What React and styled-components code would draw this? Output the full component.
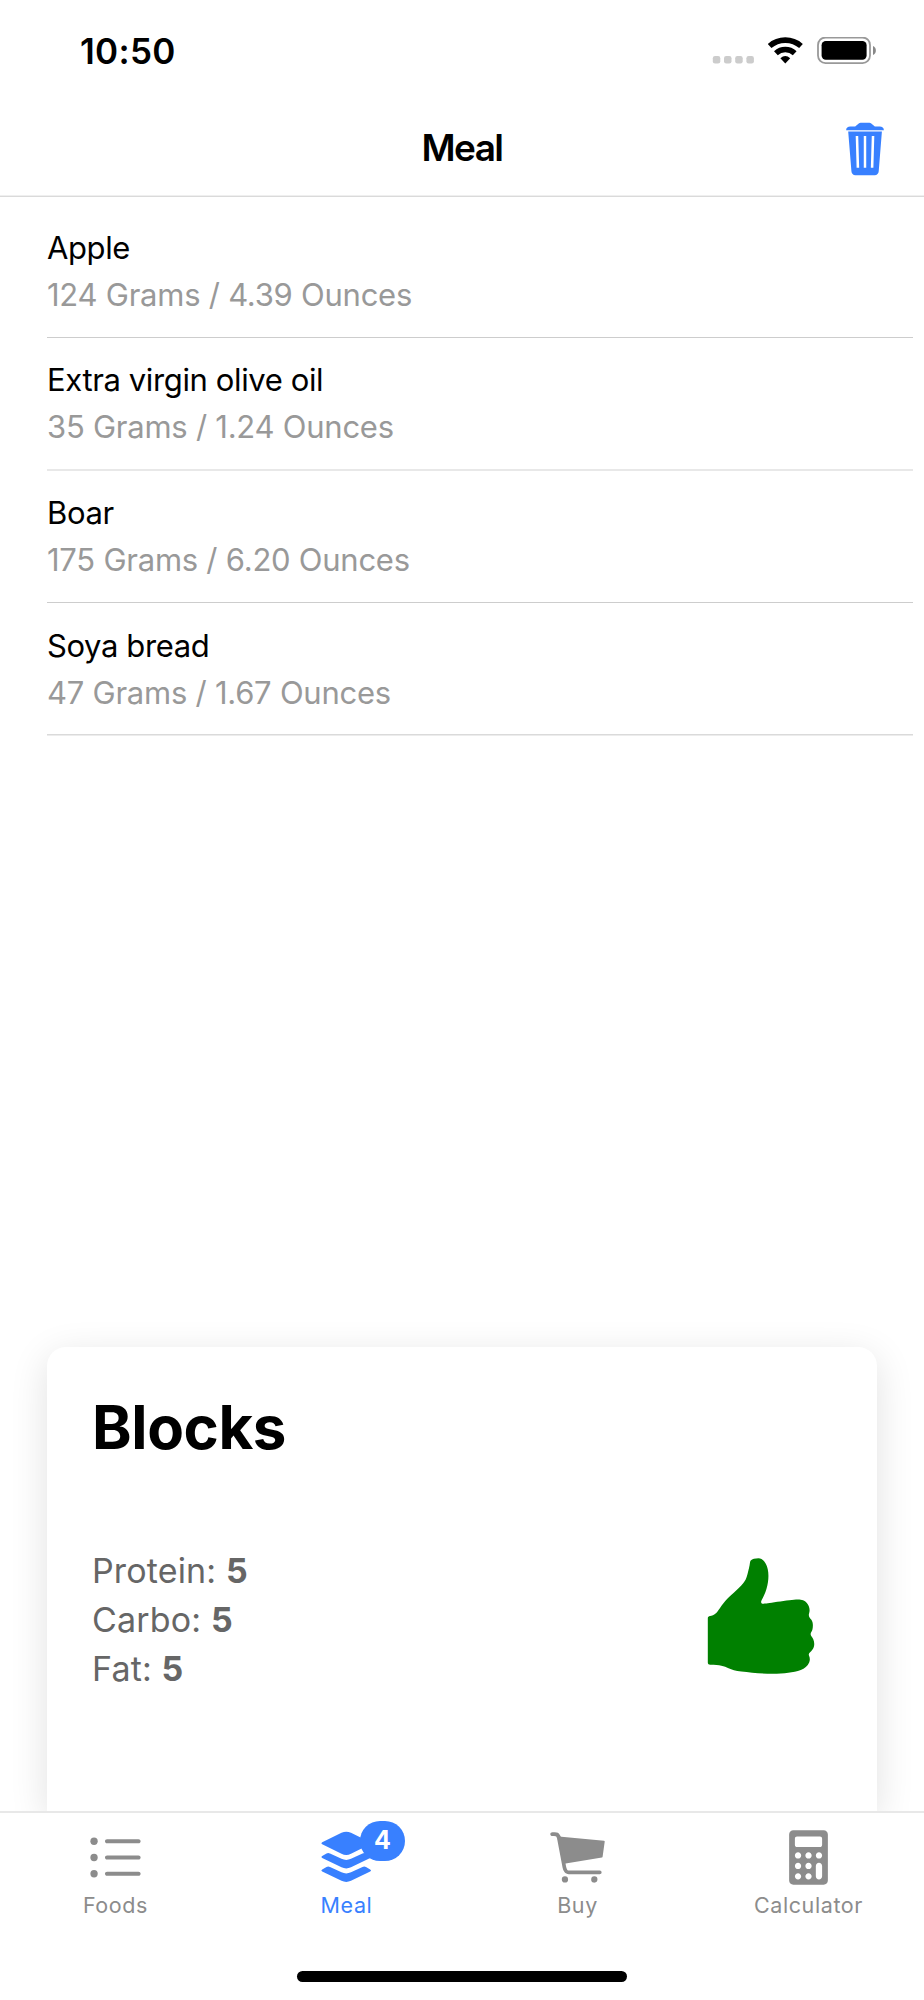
import styled, { createGlobalStyle } from "styled-components";
import {
  IoIosCalculator,
  IoIosCart,
  IoIosList,
  IoIosThumbsUp,
  IoIosTrash,
} from "react-icons/io";

const GlobalStyle = createGlobalStyle`
  * {
    box-sizing: border-box;
  }
  body {
    margin: 0;
    background: #fff;
  }
`;

const Screen = styled.div`
  display: flex;
  flex-direction: column;
  width: 924px;
  height: 2000px;
  overflow: hidden;
  background: #fff;
  color: #000;
  font-family: Inter, "Liberation Sans", sans-serif;
  svg {
    display: block;
    flex-shrink: 0;
  }
`;

const StatusBar = styled.div`
  display: flex;
  justify-content: space-between;
  align-items: center;
  height: 102px;
  padding: 0 47px 0 80px;
`;

const Time = styled.span`
  font-size: 35px;
  font-weight: 600;
  letter-spacing: 0.3px;
`;

const StatusIcons = styled.div`
  display: flex;
  align-items: center;
`;

const Toolbar = styled.header`
  display: grid;
  grid-template-columns: 1fr auto 1fr;
  align-items: center;
  height: 95px;
  padding: 0 24px;
  border-bottom: 1px solid #dadada;
  box-shadow: inset 0 -1px #efefef;
`;

const Title = styled.h1`
  grid-column: 2;
  margin: 0;
  padding-bottom: 3px;
  font-size: 37px;
  font-weight: 600;
  letter-spacing: -1.6px;
`;

const ClearButton = styled.button`
  justify-self: end;
  padding: 0;
  border: 0;
  background: none;
  color: #3880ff;
`;

const Content = styled.main`
  display: flex;
  flex-direction: column;
  justify-content: space-between;
  flex: 1;
  min-height: 0;
  overflow: hidden;
`;

const List = styled.ul`
  margin: 0;
  padding: 8px 11px 0 47px;
  list-style: none;
`;

const Item = styled.li`
  height: 132.8px;
  padding-top: 23.6px;
  border-bottom: 1px solid ${(props) => (props.$soft ? "#e8e8e8" : "#cdcdcd")};
  box-shadow: ${(props) => (props.$soft ? "inset 0 -1px #e8e8e8" : "none")};
  &:last-child {
    border-color: #ececec;
    box-shadow: inset 0 -1px #dadada;
  }
`;

const ItemName = styled.h2`
  margin: 0;
  font-size: 31px;
  font-weight: 400;
  line-height: 37px;
  letter-spacing: -0.38px;
`;

const ItemAmount = styled.p`
  margin: 10px 0 0;
  color: #999;
  font-size: 31px;
  line-height: 37px;
  letter-spacing: -0.25px;
`;

const Card = styled.section`
  flex-shrink: 0;
  height: 464px;
  margin: 0 47px;
  padding: 46px 45px;
  border-radius: 19px 19px 0 0;
  box-shadow: 0 9px 38px rgba(0, 0, 0, 0.12);
`;

const CardTitle = styled.h2`
  margin: 0;
  font-size: 60px;
  font-weight: 700;
  line-height: 68px;
  letter-spacing: -0.4px;
`;

const CardBody = styled.div`
  display: flex;
  justify-content: space-between;
  align-items: flex-start;
  margin-top: 85px;
  color: #666;
  font-size: 34px;
  line-height: 49px;
  letter-spacing: 0.15px;
  svg {
    margin-top: -1px;
  }
`;

const TabBar = styled.nav`
  display: grid;
  grid-template-columns: repeat(4, 1fr);
  height: 141px;
  border-top: 2px solid #e8e8e8;
`;

const Tab = styled.a`
  display: flex;
  flex-direction: column;
  align-items: center;
  padding-top: 11px;
  color: ${(props) => (props.$active ? "#3880ff" : "#8c8c8c")};
`;

const TabIcon = styled.span`
  position: relative;
  height: 67px;
`;

const TabLabel = styled.span`
  margin-top: 1px;
  font-size: 21.5px;
  line-height: 26px;
  letter-spacing: 0.6px;
`;

const Badge = styled.span`
  position: absolute;
  top: -3px;
  left: 47px;
  width: 45px;
  height: 40px;
  border-radius: 20px;
  background: #3880ff;
  color: #fff;
  font-size: 25px;
  font-weight: 700;
  line-height: 39px;
  text-align: center;
`;

const HomeArea = styled.div`
  display: flex;
  justify-content: center;
  height: 48px;
  padding-top: 19px;
`;

const HomeIndicator = styled.div`
  width: 330px;
  height: 11px;
  border-radius: 6px;
  background: #000;
`;

const StatusGlyphs = () => (
  <svg width="165" height="28" viewBox="0 0 165 28">
    <g fill="#ccc">
      <rect x="0.8" y="19" width="7.5" height="7.5" rx="2.2" />
      <rect x="12" y="19" width="7.5" height="7.5" rx="2.2" />
      <rect x="23.2" y="19" width="7.5" height="7.5" rx="2.2" />
      <rect x="34.4" y="19" width="7.5" height="7.5" rx="2.2" />
    </g>
    <g fill="none" stroke="#000" strokeWidth="5.6">
      <path d="M57.6 9A24 24 0 0 1 89 9" />
      <path d="M63.9 16.2A14 14 0 0 1 82.7 16.2" />
    </g>
    <path d="M68.4 21.2Q73.3 17 78.2 21.2L73.3 26.6Z" />
    <rect x="106" y="0.5" width="52" height="25.6" rx="7.5" fill="none" stroke="#999" strokeWidth="1.8" />
    <rect x="109.6" y="4" width="45" height="18.8" rx="4.2" />
    <path d="M161 9C164.8 10.5 164.8 16.5 161 18Z" fill="#888" />
  </svg>
);

const LayersIcon = () => (
  <svg width="67" height="67" viewBox="0 0 67 67" fill="currentColor">
    <path d="M9.2 18.3L28.5 8.8Q33.2 6.7 38 8.8L57.2 18.3Q59 19.3 57.2 20.3L38 29.8Q33.2 32.2 28.5 29.8L9.2 20.3Q7.4 19.3 9.2 18.3Z" />
    <path d="M9.2 32L13.5 29.5Q15.2 28.7 17 29.5L28.5 34.8Q33.2 37 38 34.8L49.5 29.5Q51.2 28.7 53 29.5L57.2 32Q59 33 57.2 34L38 43.3Q33.2 45.5 28.5 43.3L9.2 34Q7.4 33 9.2 32Z" />
    <path d="M9.2 45.5L13.5 43Q15.2 42.2 17 43L28.5 48.3Q33.2 50.5 38 48.3L49.5 43Q51.2 42.2 53 43L57.2 45.5Q59 46.5 57.2 47.5L38 56.8Q33.2 59 28.5 56.8L9.2 47.5Q7.4 46.5 9.2 45.5Z" />
  </svg>
);

const foods = [
  { name: "Apple", grams: "124", ounces: "4.39" },
  { name: "Extra virgin olive oil", grams: "35", ounces: "1.24" },
  { name: "Boar", grams: "175", ounces: "6.20" },
  { name: "Soya bread", grams: "47", ounces: "1.67" },
];

const blocks = [
  { name: "Protein", value: 5 },
  { name: "Carbo", value: 5 },
  { name: "Fat", value: 5 },
];

const App = () => {
  return (
    <Screen>
      <GlobalStyle />
      <StatusBar>
        <Time>10:50</Time>
        <StatusIcons>
          <StatusGlyphs />
        </StatusIcons>
      </StatusBar>
      <Toolbar>
        <Title>Meal</Title>
        <ClearButton aria-label="Clear meal">
          <IoIosTrash size={70} />
        </ClearButton>
      </Toolbar>
      <Content>
        <List>
          {foods.map((food, i) => (
            <Item key={food.name} $soft={i % 2 === 1}>
              <ItemName>{food.name}</ItemName>
              <ItemAmount>
                {food.grams} Grams / {food.ounces} Ounces
              </ItemAmount>
            </Item>
          ))}
        </List>
        <Card>
          <CardTitle>Blocks</CardTitle>
          <CardBody>
            <div>
              {blocks.map((block) => (
                <div key={block.name}>
                  {block.name}: <b>{block.value}</b>
                </div>
              ))}
            </div>
            <IoIosThumbsUp size={142} color="green" />
          </CardBody>
        </Card>
      </Content>
      <TabBar>
        <Tab>
          <TabIcon>
            <IoIosList size={67} />
          </TabIcon>
          <TabLabel>Foods</TabLabel>
        </Tab>
        <Tab $active>
          <TabIcon>
            <LayersIcon />
            <Badge>{foods.length}</Badge>
          </TabIcon>
          <TabLabel>Meal</TabLabel>
        </Tab>
        <Tab>
          <TabIcon>
            <IoIosCart size={67} />
          </TabIcon>
          <TabLabel>Buy</TabLabel>
        </Tab>
        <Tab>
          <TabIcon>
            <IoIosCalculator size={67} />
          </TabIcon>
          <TabLabel>Calculator</TabLabel>
        </Tab>
      </TabBar>
      <HomeArea>
        <HomeIndicator />
      </HomeArea>
    </Screen>
  );
};

export default App;
